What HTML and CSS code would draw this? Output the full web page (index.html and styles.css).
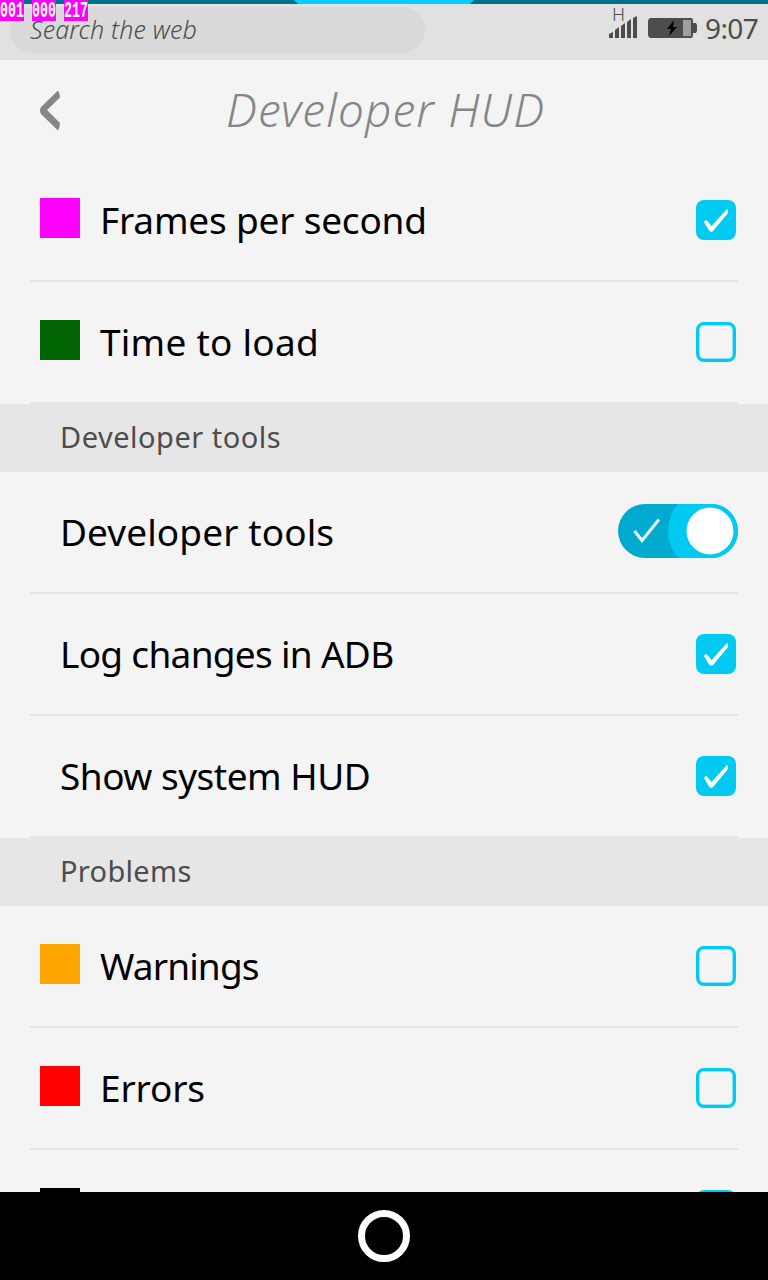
FILE: index.html
```html
<!DOCTYPE html>
<html lang="en">
<head>
<meta charset="utf-8">
<title>Developer HUD</title>
<link rel="stylesheet" href="styles.css">
</head>
<body>
<div class="screen">
  <div class="progress"><svg width="180" height="4" viewBox="0 0 180 4"><path d="M0 0h180l-4 4H4z" fill="#00cfff"/></svg></div>
  <div class="hud"><span class="counter"><b>001</b></span><span class="counter"><b>000</b></span><span class="counter"><b>217</b></span></div>
  <div class="statusbar">
    <div class="search"><span class="search-text">Search the web</span></div>
    <div class="status-icons">
      <div class="signal">
        <span class="network">H</span>
        <svg width="28" height="23" viewBox="0 0 28 23" fill="#4d4d4d"><path d="M0 22v-4l4-2v6zM6 22v-8l4-3v11zM12 22V10l4-3v15zM18 22V6l4-3v19zM24 22V2l4-2v22z"/></svg>
      </div>
      <svg class="battery" width="49" height="20" viewBox="0 0 49 20"><path d="M3 0h40q2 0 2 3v2h3l1 2v6l-1 2h-3v2q0 3-2 3H3q-3 0-3-4V4q0-4 3-4z" fill="#4d4d4d"/><path d="M35 2h8v16h-8z" fill="#a0a0a0"/><path d="M26 2l-7 9h4l-2 7 8-9h-4z" fill="#000"/></svg>
      <span class="clock">9:07</span>
    </div>
  </div>
  <header class="header">
    <svg class="back" width="22" height="42" viewBox="0 0 22 42"><path d="M19 .5Q21 4 21 7.500L8 20 21 33Q21 37 19 40.500L2 24Q0 20.500 2 17z" fill="#868686"/></svg>
    <h1 class="title">Developer HUD</h1>
  </header>
  <main class="list">
    <div class="row swatched"><i class="swatch magenta"></i><span class="label l-frames">Frames per second</span><span class="check on"><svg width="40" height="40" viewBox="0 0 40 40"><path d="M8 22l1.500-2 1.500.5 4.500 5.500L31 9l1 1v3L17.500 30.500Q15.500 33 13 30.500z" fill="#fff"/></svg></span></div>
    <div class="row swatched"><i class="swatch green"></i><span class="label l-time">Time to load</span><span class="check"></span></div>
    <h2 class="section s-tools">Developer tools</h2>
    <div class="row"><span class="label l-tools">Developer tools</span><svg class="switch" width="120" height="54" viewBox="0 0 120 54"><clipPath id="pill"><rect width="120" height="54" rx="27"/></clipPath><g clip-path="url(#pill)"><path d="M0 0h120v54H0z" fill="#00aacf"/><circle cx="92" cy="27" r="42" fill="#00caf2"/></g><circle cx="92" cy="27" r="23.500" fill="#fff"/><path d="M16.500 27l7.500 9.500L41 15.500" fill="none" stroke="#dff5fa" stroke-width="3.200"/></svg></div>
    <div class="row"><span class="label l-log">Log changes in ADB</span><span class="check on"><svg width="40" height="40" viewBox="0 0 40 40"><path d="M8 22l1.500-2 1.500.5 4.500 5.500L31 9l1 1v3L17.500 30.500Q15.500 33 13 30.500z" fill="#fff"/></svg></span></div>
    <div class="row"><span class="label l-show">Show system HUD</span><span class="check on"><svg width="40" height="40" viewBox="0 0 40 40"><path d="M8 22l1.500-2 1.500.5 4.500 5.500L31 9l1 1v3L17.500 30.500Q15.500 33 13 30.500z" fill="#fff"/></svg></span></div>
    <h2 class="section s-problems">Problems</h2>
    <div class="row swatched"><i class="swatch orange"></i><span class="label l-warn">Warnings</span><span class="check"></span></div>
    <div class="row swatched"><i class="swatch red"></i><span class="label l-err">Errors</span><span class="check"></span></div>
    <div class="row swatched"><i class="swatch black"></i><span class="check"></span></div>
  </main>
  <footer class="softkeys"><span class="home"></span></footer>
</div>
</body>
</html>
```
FILE: styles.css
```css
* { box-sizing: border-box; }
body { margin: 0; font-family: "Noto Sans", sans-serif; background: #f4f4f4; }
.screen { position: relative; display: flex; flex-direction: column; width: 768px; height: 1280px; overflow: hidden; }
.progress { height: 4px; flex: none; background: #00708c; padding-left: 294px; }
.progress svg { display: block; }
.hud { position: absolute; left: 0; top: 0; display: flex; gap: 8px; z-index: 2; }
.counter { width: 24px; height: 21px; background: #f0f; color: #fff; }
.counter b { display: block; font: bold 13.33px/23px "Liberation Mono", monospace; transform: scaleY(1.65); }
.statusbar { height: 56px; flex: none; display: flex; justify-content: space-between; background: #e1e1e1; padding: 3px 10px 0; }
.search { width: 415px; height: 46px; border-radius: 23px; background: #d9d9d9; padding-left: 20px; }
.search-text { display: block; font-size: 25px; font-style: italic; font-weight: 300; line-height: 44px; letter-spacing: .15px; color: #4d4d4d; white-space: nowrap; }
.status-icons { display: flex; align-items: flex-start; color: #4d4d4d; }
.signal { display: flex; flex-direction: column; width: 28px; margin-right: 11px; }
.network { font-size: 18px; font-weight: 300; line-height: 14px; height: 9px; padding-left: 3px; }
.signal svg { display: block; }
.battery { margin: 11px 8px 0 0; }
.clock { width: 53px; font-size: 28px; line-height: 42px; letter-spacing: -.6px; white-space: nowrap; }
.header { height: 100px; flex: none; display: flex; padding-left: 39px; }
.back { margin-top: 30px; }
.title { margin: 0 0 0 165px; font-size: 46px; font-style: italic; font-weight: 300; line-height: 98px; letter-spacing: 1.1px; color: #868686; white-space: nowrap; }
.list { flex: 1; min-height: 0; overflow: hidden; }
.row { height: 122px; margin: 0 30px; padding-left: 30px; display: flex; border-bottom: 2px solid #e6e6e3; }
.swatched { padding-left: 10px; }
.swatch { width: 40px; height: 40px; margin: 38px 20px 0 0; }
.magenta { background: #f0f; }
.green { background: #006400; }
.orange { background: #ffa500; }
.red { background: #f00; }
.black { background: #000; }
.label { font-size: 37px; line-height: 120px; color: #000; white-space: nowrap; }
.l-frames { letter-spacing: -.2px; }
.l-time { letter-spacing: .25px; }
.l-tools { letter-spacing: .1px; }
.l-log { letter-spacing: -.7px; }
.l-show { letter-spacing: -.5px; }
.l-warn { letter-spacing: -.85px; }
.l-err { letter-spacing: -.15px; }
.check { width: 40px; height: 40px; margin: 40px 2px 0 auto; border: 3px solid #00caf2; border-radius: 8px; box-shadow: inset 0 0 0 1px #8ae2f3; }
.check.on { border: 0; background: #00caf2; box-shadow: none; }
.check svg { display: block; }
.switch { margin: 32px 0 0 auto; }
.section { margin: 0; height: 68px; padding-left: 60px; background: #e6e6e6; color: #4d4d4d; font-size: 29px; font-weight: 400; line-height: 66px; white-space: nowrap; }
.s-tools { letter-spacing: .5px; }
.s-problems { letter-spacing: .3px; }
.softkeys { height: 88px; flex: none; background: #000; display: flex; justify-content: center; padding-top: 18px; }
.home { width: 52px; height: 52px; border: 7px solid #fff; border-radius: 50%; }
```
